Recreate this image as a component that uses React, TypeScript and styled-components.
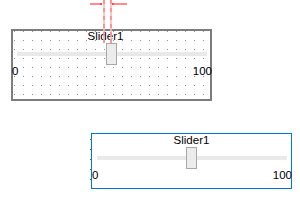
import React from 'react';
import styled, { createGlobalStyle } from 'styled-components';

const Global = createGlobalStyle`
  html, body {
    margin: 0;
    padding: 0;
    background: #ffffff;
  }
  body {
    width: 300px;
    height: 200px;
    overflow: hidden;
    font-family: 'Liberation Sans', Arial, sans-serif;
  }
`;

const Page = styled.div`
  display: flex;
  flex-direction: column;
  padding-top: 29px;
`;

const DesignArea = styled.div`
  position: relative;
  margin-left: 11px;
  width: 201px;
`;

const Guides = styled.svg`
  position: absolute;
  z-index: 2;
  left: 77px;
  top: -29px;
  width: 42px;
  height: 44px;
  pointer-events: none;
`;

const Box = styled.div<{ $selected?: boolean; $height: number }>`
  position: relative;
  box-sizing: border-box;
  width: 201px;
  height: ${(p) => p.$height}px;
  display: flex;
  flex-direction: column;
  border: ${(p) => (p.$selected ? '1px solid #0078d7' : '2px solid #7d7d7d')};
  padding: ${(p) => (p.$selected ? '1px' : '0')};
  background-color: #ffffff;
  ${(p) =>
    !p.$selected &&
    `
    background-image: radial-gradient(circle at 0.5px 0.5px, #8e8e8e 0.6px, transparent 0.8px);
    background-size: 9px 9px;
    background-origin: border-box;
    background-position: 3px 2px;
  `}
`;

const RuntimeBox = styled(Box)`
  margin-left: 91px;
  margin-top: 32px;

  &::before {
    content: '';
    position: absolute;
    left: -2px;
    top: 5px;
    width: 1px;
    height: 44px;
    background: repeating-linear-gradient(to bottom, #5a5a5a 0 1px, transparent 1px 10px);
  }
`;

const Caption = styled.div<{ $shift: number }>`
  margin-top: -1px;
  height: 12px;
  line-height: 12px;
  font-size: 11.5px;
  color: #000000;
  text-align: center;
  padding-right: ${(p) => p.$shift}px;
`;

const TrackRow = styled.div`
  position: relative;
  margin-top: 1px;
  height: 22px;
  display: flex;
  align-items: center;
`;

const Track = styled.div`
  flex: 1;
  height: 4px;
  margin: 0 3px 0 4px;
  background: #e7eae8;
`;

const Thumb = styled.div`
  position: absolute;
  left: 93px;
  top: 0;
  box-sizing: border-box;
  width: 11px;
  height: 22px;
  border: 1px solid #a8a8a8;
  background: #ececec;
`;

const Scale = styled.div`
  display: flex;
  justify-content: space-between;
  height: 12px;
  line-height: 12px;
  font-size: 11.5px;
  color: #000000;
  margin-right: -2px;
  margin-left: -1px;
`;

function Slider({ shift }: { shift: number }) {
  return (
    <>
      <Caption $shift={shift}>Slider1</Caption>
      <TrackRow>
        <Track />
        <Thumb />
      </TrackRow>
      <Scale>
        <span>0</span>
        <span>100</span>
      </Scale>
    </>
  );
}

export default function App() {
  return (
    <Page>
      <Global />
      <DesignArea>
        <Box $height={72}>
          <Slider shift={12} />
        </Box>
        <Guides viewBox="0 0 42 44">
          <rect x="15" y="0" width="2" height="43" fill="#ffb8b8" fillOpacity="0.8" />
          <line x1="16" y1="0" x2="16" y2="43" stroke="#ff8080" strokeOpacity="0.75" strokeWidth="2" strokeDasharray="4 4" />
          <rect x="22" y="0" width="2" height="43" fill="#ffb8b8" fillOpacity="0.8" />
          <line x1="23" y1="0" x2="23" y2="43" stroke="#ff8080" strokeOpacity="0.75" strokeWidth="2" strokeDasharray="4 4" />
          <rect x="2" y="3" width="12" height="2" fill="#ff8c8c" />
          <rect x="12" y="3" width="2" height="2" fill="#ff4a4a" />
          <rect x="24" y="3" width="15" height="2" fill="#ff8c8c" />
          <rect x="24" y="3" width="2" height="2" fill="#ff4a4a" />
        </Guides>
      </DesignArea>
      <RuntimeBox $selected $height={56}>
        <Slider shift={0} />
      </RuntimeBox>
    </Page>
  );
}
